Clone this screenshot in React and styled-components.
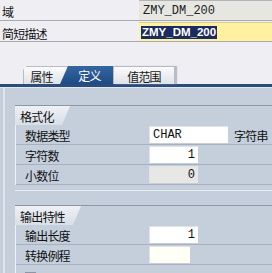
import React from 'react';
import styled, { createGlobalStyle } from 'styled-components';

const Global = createGlobalStyle`
  html, body { margin: 0; padding: 0; }
  body {
    background: #eeeef3;
    width: 272px;
    height: 273px;
    overflow: hidden;
    font-family: "Noto Sans CJK SC", "Noto Sans", sans-serif;
  }
`;

const Page = styled.div`
  width: 272px;
  height: 273px;
  display: flex;
  flex-direction: column;
  overflow: hidden;
  & > * { flex-shrink: 0; }
`;

const HeadRow = styled.div`
  display: flex;
  align-items: stretch;
  height: ${p => p.$h}px;
  padding-top: ${p => p.$pt}px;
  border-bottom: 1px solid #a9a9b2;
`;

const HeadLabel = styled.div`
  width: 137px;
  padding: 3px 0 0 2px;
  box-sizing: border-box;
  display: flex;
  align-items: center;
  font-size: 12px;
  letter-spacing: -0.8px;
  color: #111;
`;

const HeadValue = styled.div`
  flex: 1;
  margin-left: 2px;
  display: flex;
  align-items: center;
  padding-left: ${p => p.$pl}px;
  background: ${p => p.$bg};
  border-top: 1px solid ${p => p.$bt};
  font-family: "Liberation Mono", monospace;
  font-size: 12px;
  color: #222;
`;

const Selected = styled.span`
  background: #1c2b5e;
  color: #fff;
  font-family: "Liberation Sans", Arial, sans-serif;
  font-weight: bold;
  font-size: 11.5px;
  line-height: 13px;
  padding: 0 1px;
`;

const Spacer = styled.div`
  height: 21px;
`;

const TabStrip = styled.div`
  height: 21px;
  display: flex;
  align-items: flex-end;
  padding-left: 23px;
`;

const Tab = styled.div`
  position: relative;
  z-index: ${p => (p.$active ? 2 : 1)};
  width: ${p => p.$w}px;
  height: 18px;
  box-sizing: border-box;
  margin-left: ${p => p.$ml || 0}px;
  padding-right: ${p => p.$pr || 0}px;
  padding-left: ${p => p.$pl || 0}px;
  padding-top: 1px;
  display: flex;
  align-items: center;
  justify-content: center;
  font-size: 12px;
  letter-spacing: -0.8px;
  color: ${p => (p.$active ? '#fff' : '#1a1a1a')};
  background: ${p =>
    p.$active
      ? 'linear-gradient(#3565a0, #1f4c86)'
      : 'linear-gradient(#fbfbfc, #dfe2e7)'};
  border: ${p => (p.$active ? 'none' : '1px solid #b7bcc4')};
  border-bottom: none;
  box-shadow: ${p => (p.$shadow ? '2px 0 1px #b9bec6' : 'none')};
  clip-path: ${p => p.$clip || 'none'};
`;

const BlueLine = styled.div`
  height: 3px;
  background: #2b4d7c;
  border-bottom: 1px solid #e3e8ef;
`;

const Panel = styled.div`
  flex: 1;
  background: #c5cedb;
  padding-left: 3px;
  display: flex;
`;

const PanelInner = styled.div`
  flex: 1;
  border-left: 2px solid #e0e5ec;
  padding: 17px 0 0 10px;
  display: flex;
  flex-direction: column;
  gap: 14px;
  & > * { flex-shrink: 0; }
`;

const Group = styled.div`
  border-top: 1px solid #8c98aa;
  border-bottom: ${p => (p.$last ? 'none' : '1px solid #e6eaf0')};
  padding-bottom: ${p => (p.$last ? 0 : 5)}px;
`;

const GroupTitle = styled.div`
  width: ${p => p.$w}px;
  height: 19px;
  box-sizing: border-box;
  padding: 1px 0 0 5px;
  display: flex;
  align-items: center;
  font-size: 12px;
  letter-spacing: -0.8px;
  color: #111;
  background: linear-gradient(#eef1f5, #d9dfe8);
  clip-path: polygon(0 0, 100% 0, calc(100% - 8px) 100%, 0 100%);
`;

const GroupBody = styled.div`
  border-left: 1px solid #eef1f5;
`;

const Row = styled.div`
  height: 19px;
  display: flex;
  align-items: center;
  border-bottom: 1px solid #a7b0be;
`;

const RowLabel = styled.div`
  width: 133px;
  padding: 2px 0 0 9px;
  box-sizing: border-box;
  font-size: 12px;
  letter-spacing: -0.8px;
  color: #111;
`;

const Input = styled.div`
  width: ${p => p.$w}px;
  height: 18px;
  box-sizing: border-box;
  border: 1px solid #dfe3e8;
  border-right-color: #c9ced6;
  border-bottom-color: #c9ced6;
  background: ${p => p.$bg || '#fff'};
  display: flex;
  align-items: center;
  justify-content: ${p => (p.$right ? 'flex-end' : 'flex-start')};
  padding: 0 3px;
  font-family: "Liberation Mono", monospace;
  font-size: 12px;
  color: #111;
`;

const After = styled.span`
  margin-left: 5px;
  padding-top: 2px;
  font-size: 12px;
  letter-spacing: -0.8px;
  color: #111;
`;

const CheckRow = styled.div`
  height: 19px;
  display: flex;
  align-items: center;
  padding-left: 9px;
  gap: 5px;
`;

const CheckBox = styled.div`
  width: 9px;
  height: 9px;
  margin-top: 6px;
  border: 1px solid #8d96a4;
  background: #fff;
`;

export default function App() {
  return (
    <>
      <Global />
      <Page>
        <HeadRow $h={20} $pt={0}>
          <HeadLabel>域</HeadLabel>
          <HeadValue $bg="#e7e7e2" $bt="#b3b3b8" $pl={4}>ZMY_DM_200</HeadValue>
        </HeadRow>
        <HeadRow $h={19} $pt={1}>
          <HeadLabel>简短描述</HeadLabel>
          <HeadValue $bg="#fff1a0" $bt="#d6cf9c" $pl={2}>
            <Selected>ZMY_DM_200</Selected>
          </HeadValue>
        </HeadRow>
        <Spacer />
        <TabStrip>
          <Tab $w={45} $pr={8} $clip="polygon(4px 0, 100% 0, 100% 100%, 0 100%, 0 4px)">属性</Tab>
          <Tab $w={53} $ml={-8} $pl={6} $active $clip="polygon(8px 0, 100% 0, 100% 100%, 0 100%)">定义</Tab>
          <Tab $w={62} $shadow>值范围</Tab>
        </TabStrip>
        <BlueLine />
        <Panel>
          <PanelInner>
            <Group>
              <GroupTitle $w={55}>格式化</GroupTitle>
              <GroupBody>
                <Row>
                  <RowLabel>数据类型</RowLabel>
                  <Input $w={80}>CHAR</Input>
                  <After>字符串</After>
                </Row>
                <Row>
                  <RowLabel>字符数</RowLabel>
                  <Input $w={50} $right>1</Input>
                </Row>
                <Row>
                  <RowLabel>小数位</RowLabel>
                  <Input $w={50} $right $bg="#e7e7e6">0</Input>
                </Row>
              </GroupBody>
            </Group>
            <Group $last>
              <GroupTitle $w={66}>输出特性</GroupTitle>
              <GroupBody>
                <Row>
                  <RowLabel>输出长度</RowLabel>
                  <Input $w={50} $right>1</Input>
                </Row>
                <Row>
                  <RowLabel>转换例程</RowLabel>
                  <Input $w={42} $bg="#fffff6"></Input>
                </Row>
                <CheckRow>
                  <CheckBox />
                </CheckRow>
              </GroupBody>
            </Group>
          </PanelInner>
        </Panel>
      </Page>
    </>
  );
}
